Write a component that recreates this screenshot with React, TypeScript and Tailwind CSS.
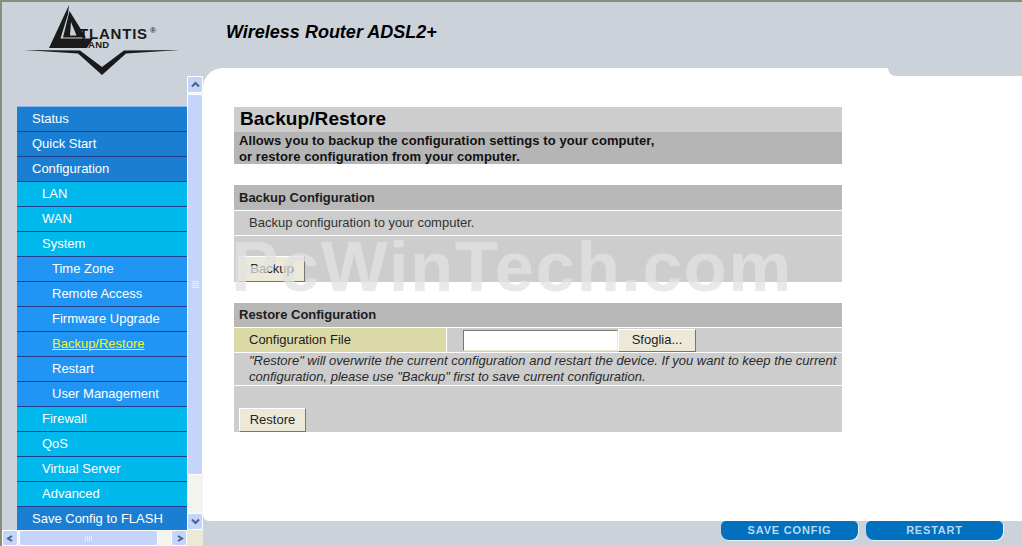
const menu = [
  { label: "Status", level: 1 },
  { label: "Quick Start", level: 1 },
  { label: "Configuration", level: 1 },
  { label: "LAN", level: 2 },
  { label: "WAN", level: 2 },
  { label: "System", level: 2 },
  { label: "Time Zone", level: 3 },
  { label: "Remote Access", level: 3 },
  { label: "Firmware Upgrade", level: 3 },
  { label: "Backup/Restore", level: 3, active: true },
  { label: "Restart", level: 3 },
  { label: "User Management", level: 3 },
  { label: "Firewall", level: 2 },
  { label: "QoS", level: 2 },
  { label: "Virtual Server", level: 2 },
  { label: "Advanced", level: 2 },
  { label: "Save Config to FLASH", level: 1 },
];

function Logo() {
  return (
    <svg width="190" height="80" viewBox="0 0 190 80" className="overflow-visible">
      <polygon points="69,5 49,48 87,48 93,38.5 60.5,38.5 68,14" fill="#1a1a1a" />
      <path d="M69.5 11 63 37.5H86ZM71 22 70 35.5H76.5Z" fillRule="evenodd" fill="#1a1a1a" />
      <text x="79" y="39" fontFamily="'Liberation Sans', sans-serif" fontWeight="700" fontSize="15" letterSpacing="0.8" fill="#1a1a1a">TLANTIS</text>
      <text x="150" y="33" fontFamily="'Liberation Sans', sans-serif" fontWeight="700" fontSize="8" fill="#333">®</text>
      <text x="88" y="48" fontFamily="'Liberation Sans', sans-serif" fontWeight="700" fontSize="9.5" letterSpacing="0.3" fill="#1a1a1a">AND</text>
      <polygon points="24,50 80,50.5 102,67 124,50.5 180,50 126,53.5 102,75 78,53.5" fill="#1a1a1a" />
    </svg>
  );
}

function ArrowBtn({ d, className }: { d: string; className: string }) {
  return (
    <div className={`flex items-center justify-center rounded-[2px] border border-white bg-[#c4d4fb] ${className}`}>
      <svg width="9" height="7" viewBox="0 0 9 7" fill="none">
        <path d={d} stroke="#4d6185" strokeWidth="2" />
      </svg>
    </div>
  );
}

function VScroll() {
  return (
    <div className="flex h-[454px] w-4 flex-col bg-[#f4f4ee]">
      <ArrowBtn d="M1 5.5 4.5 2 8 5.5" className="h-[17px] w-4 shrink-0" />
      <div className="mt-[1px] flex h-[381px] w-4 items-center justify-center rounded-[2px] border border-white bg-[#c4d4fb]">
        <div className="flex w-[7px] flex-col gap-[1px]">
          <div className="h-px bg-[#e8eefc]" />
          <div className="h-px bg-[#e8eefc]" />
          <div className="h-px bg-[#e8eefc]" />
          <div className="h-px bg-[#e8eefc]" />
        </div>
      </div>
      <div className="flex-1" />
      <ArrowBtn d="M1 1.5 4.5 5 8 1.5" className="h-[17px] w-4 shrink-0" />
    </div>
  );
}

function HScroll() {
  return (
    <div className="flex h-4 w-[185px] bg-[#f4f4ee]">
      <ArrowBtn d="M6 1 2 3.5 6 6" className="h-4 w-[16px] shrink-0" />
      <div className="ml-[1px] flex h-4 w-[139px] items-center justify-center gap-[1px] rounded-[2px] border border-white bg-[#c4d4fb]">
        <div className="h-[5px] w-px bg-[#e8eefc]" />
        <div className="h-[5px] w-px bg-[#e8eefc]" />
        <div className="h-[5px] w-px bg-[#e8eefc]" />
        <div className="h-[5px] w-px bg-[#e8eefc]" />
      </div>
      <div className="flex-1" />
      <ArrowBtn d="M3 1 7 3.5 3 6" className="h-4 w-[16px] shrink-0" />
    </div>
  );
}

function MenuItem({ label, level, active }: { label: string; level: number; active?: boolean }) {
  const bg = level === 1 ? "bg-[#1a7fd3] pl-[15px]" : level === 2 ? "bg-[#00b8ec] pl-[25px]" : "bg-[#2095f3] pl-[35px]";
  return (
    <div className={`flex h-[25px] shrink-0 items-center border-b border-b-[#23408f] text-[13px] ${bg}`}>
      <span className={active ? "text-[#f5f52a] underline" : "text-white"}>{label}</span>
    </div>
  );
}

function FormButton({ label, className }: { label: string; className: string }) {
  return (
    <button className={`flex items-center justify-center border border-t-white border-l-white border-r-[#77776a] border-b-[#77776a] bg-[#ece9d8] text-[13px] text-[#222] ${className}`}>
      {label}
    </button>
  );
}

function FooterButton({ label }: { label: string }) {
  return (
    <button className="flex h-[19px] w-[137px] items-center justify-center rounded-b-[8px] rounded-t-[5px] bg-[#0070bf] text-[11px] font-bold tracking-[0.8px] text-[#b9d9f0] shadow-[1px_1px_0_#eef1f4]">
      {label}
    </button>
  );
}

export default function App() {
  return (
    <div className="relative flex h-[546px] w-[1022px] flex-col overflow-hidden border-t-2 border-l-2 border-[#8c8c7c] bg-[#cbd2d9] font-['Liberation_Sans',Arial,sans-serif]">
      {/* header */}
      <div className="flex h-[66px] shrink-0">
        <div className="-mt-[2px] -ml-[2px] h-[68px] w-[226px] shrink-0">
          <Logo />
        </div>
        <h1 className="mt-[20px] h-5 text-[18px] leading-5 font-bold text-black italic">Wireless Router ADSL2+</h1>
      </div>

      <div className="flex min-h-0 flex-1">
        {/* frame with the menu */}
        <div className="flex w-[201px] shrink-0 flex-col pt-2">
          <div className="flex">
            <div className="flex w-[185px] flex-col pl-[15px]">
              <div className="h-[30px] shrink-0" />
              <div className="flex h-[424px] flex-col overflow-hidden border-t border-t-[#8db4ec]">
                {menu.map((m) => (
                  <MenuItem key={m.label} label={m.label} level={m.level} active={m.active} />
                ))}
              </div>
            </div>
            <VScroll />
          </div>
          <div className="flex">
            <HScroll />
            <div className="h-4 w-4 bg-[#ece9d8]" />
          </div>
        </div>

        <div className="flex min-w-0 flex-1 flex-col">
          {/* main page */}
          <div className="relative flex-1 rounded-tl-[20px] rounded-bl-[6px] bg-white pt-[39px] pl-[31px]">
            <div className="absolute top-0 right-0 h-2 w-[134px] rounded-bl-[8px] bg-[#cbd2d9]" />
            <div className="flex w-[608px] flex-col text-[13px] text-[#1c1c1c]">
              <div className="flex h-[25px] items-center bg-[#cdcdcd] pb-px pl-[6px] text-[19px] font-bold tracking-[0.1px] text-black">Backup/Restore</div>
              <div className="h-8 bg-[#b5b5b5] pt-px pl-[5px] text-[13px] leading-4 font-bold tracking-[0.08px] text-[#111]">
                Allows you to backup the configuration settings to your computer,
                <br />
                or restore configuration from your computer.
              </div>

              <div className="mt-[21px] flex h-[25px] items-center bg-[#b8b8b8] pt-px pl-[5px] font-bold">Backup Configuration</div>
              <div className="mt-px flex h-6 items-center bg-[#cdcdcd] pl-[15px] text-[#333]">Backup configuration to your computer.</div>
              <div className="mt-px flex h-[46px] items-end bg-[#cdcdcd] pl-[5px]">
                <FormButton label="Backup" className="h-[26px] w-[66px]" />
              </div>

              <div className="mt-[21px] flex h-6 items-center bg-[#b8b8b8] pl-[5px] font-bold">Restore Configuration</div>
              <div className="mt-px flex h-6 gap-px">
                <div className="flex w-[212px] items-center bg-[#dcd9a9] pl-[15px]">Configuration File</div>
                <div className="flex flex-1 items-center bg-[#cdcdcd] pl-4">
                  <div className="h-[21px] w-[155px] border border-t-[#77776a] border-l-[#77776a] border-r-[#ece9d8] border-b-[#ece9d8] bg-white" />
                  <FormButton label="Sfoglia..." className="h-[23px] w-[78px]" />
                </div>
              </div>
              <div className="mt-px h-[32px] bg-[#cdcdcd] pr-1 pl-[15px] text-[13px] leading-4 text-[#2a2a2a] italic">
                "Restore" will overwrite the current configuration and restart the device. If you want to keep the current configuration, please use "Backup" first to save current configuration.
              </div>
              <div className="mt-px flex h-[46px] items-end bg-[#cdcdcd] pl-[5px]">
                <FormButton label="Restore" className="h-6 w-[67px]" />
              </div>
            </div>
          </div>
          {/* bottom bar */}
          <div className="flex h-[25px] shrink-0 items-start justify-end gap-2 pr-[19px]">
            <FooterButton label="SAVE CONFIG" />
            <FooterButton label="RESTART" />
          </div>
        </div>
      </div>

      {/* watermark burned over the page */}
      <div className="pointer-events-none absolute top-[225px] left-[229px] text-[71px] leading-[80px] font-bold tracking-[1.5px] whitespace-nowrap text-[#e1e1e1]/75">
        PcWinTech.com
      </div>
    </div>
  );
}
